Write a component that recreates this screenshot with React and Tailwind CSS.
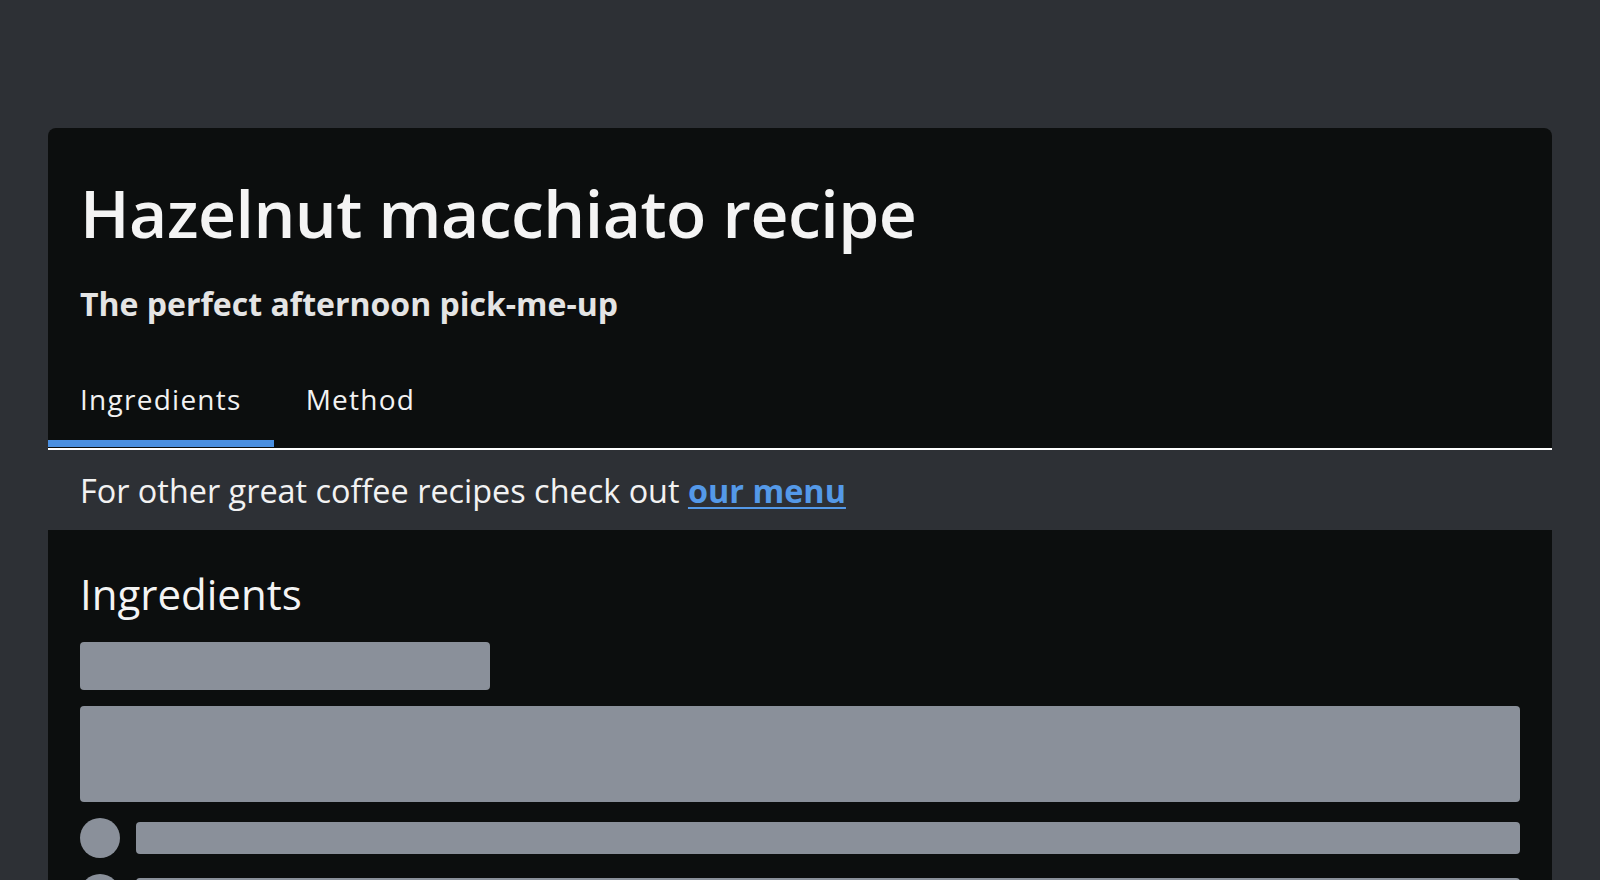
import React, { useState } from "react";

const tabs = ["Ingredients", "Method"];

const Skeleton = ({ className }) => (
    <div className={"bg-[#8a909a] " + className} />
);

const IngredientRow = () => (
    <div className="flex items-center gap-4">
        <Skeleton className="w-10 h-10 rounded-full shrink-0" />
        <Skeleton className="flex-1 h-8 rounded" />
    </div>
);

export default function App() {
    const [activeTab, setActiveTab] = useState("Ingredients");

    return (
        <div className="min-h-screen bg-[#2d3035] px-12 pt-32 font-['Open_Sans',sans-serif]">
            {/* Header card */}
            <div className="bg-[#0c0e0e] rounded-t-lg">
                <div className="px-8 pt-[45px]">
                    <h1 className="text-[66px] leading-[1.2] font-semibold tracking-[-0.5px] text-[#f4f4f4]">
                        Hazelnut macchiato recipe
                    </h1>
                    <p className="mt-[33px] text-[32px] leading-[1.2] font-bold text-[#e4e4e4]">
                        The perfect afternoon pick-me-up
                    </p>
                </div>

                {/* Tabs */}
                <div className="mt-[35px] flex border-b-2 border-white pb-px">
                    {tabs.map((tab) => (
                        <button
                            key={tab}
                            onClick={() => setActiveTab(tab)}
                            className={
                                "px-8 pt-6 pb-6 border-b-[7px] text-[28px] leading-[1.2] font-medium tracking-[0.045em] text-[#f2f2f2] " +
                                (activeTab === tab ? "border-[#4a8fe0]" : "border-transparent")
                            }
                        >
                            {tab}
                        </button>
                    ))}
                </div>
            </div>

            {/* Info line */}
            <p className="px-8 py-4 text-[32.4px] leading-[48px] text-[#f2f2f2]">
                For other great coffee recipes check out{" "}
                <a href="#" className="font-bold text-[#5499e8] underline underline-offset-4 decoration-2">
                    our menu
                </a>
            </p>

            {/* Content card */}
            <div className="bg-[#0c0e0e] px-8 pt-[39px] pb-8">
                <h2 className="text-[42px] leading-[1.2] text-[#f4f4f4]">
                    {activeTab}
                </h2>
                <div className="mt-[22px] flex flex-col gap-4">
                    <Skeleton className="w-[410px] h-12 rounded" />
                    <Skeleton className="w-full h-24 rounded" />
                    <IngredientRow />
                    <IngredientRow />
                    <IngredientRow />
                </div>
            </div>
        </div>
    );
}
